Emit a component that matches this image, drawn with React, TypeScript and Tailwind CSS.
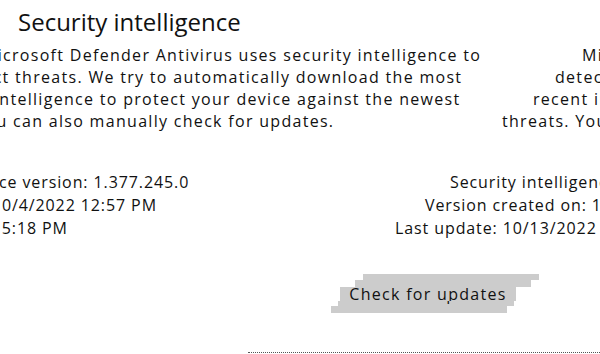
import React from "react";

// one horizontal band of the picture: content is shifted right by `shift`
// and wraps around the 600px edge
interface BandProps {
  shift: number;
  className: string;
  offsetY?: number;
  children: React.ReactNode;
}

const Band = ({ shift, className, offsetY = 0, children }: BandProps) => {
  const copy = (
    <div className="w-[600px] shrink-0" style={{ marginTop: -offsetY }}>
      {children}
    </div>
  );
  return (
    <div className={`w-[600px] overflow-hidden ${className}`}>
      <div className="flex items-start" style={{ marginLeft: shift - 600 }}>
        {copy}
        {copy}
      </div>
    </div>
  );
};

const UpdateButton = () => (
  <div className="w-[176px] h-[39px] bg-[#cccccc] flex items-center justify-center text-[16px] tracking-[1.3px] text-[#111]">
    Check for updates
  </div>
);

const paragraph = [
  { text: "Microsoft Defender Antivirus uses security intelligence to", shift: 582 },
  { text: "detect threats. We try to automatically download the most", shift: 555 },
  { text: "recent intelligence to protect your device against the newest", shift: 533 },
  { text: "threats. You can also manually check for updates.", shift: 502 },
];

const versions = [
  { text: "Security intelligence version: 1.377.245.0", shift: 450 },
  { text: "Version created on: 10/4/2022 12:57 PM", shift: 425 },
  { text: "Last update: 10/13/2022 5:18 PM", shift: 395 },
];

const buttonStrips = [
  { offsetY: 0, shift: 363, h: "h-[6px]" },
  { offsetY: 6, shift: 355, h: "h-[7px]" },
  { offsetY: 13, shift: 340, h: "h-[14px]" },
  { offsetY: 27, shift: 338, h: "h-[5px]" },
  { offsetY: 32, shift: 331, h: "h-[7px]" },
];

export default function App() {
  return (
    <div
      className="w-[600px] h-[354px] overflow-hidden bg-white flex flex-col"
      style={{ fontFamily: '"Open Sans", "Noto Sans", sans-serif' }}
    >
      <div className="h-[5px]" />
      <Band shift={18} className="h-[34px]">
        <div className="whitespace-nowrap text-[24px] leading-[34px] text-[#111]">
          Security intelligence
        </div>
      </Band>
      <div className="h-[5px]" />
      {paragraph.map((l) => (
        <Band key={l.text} shift={l.shift} className="h-[22px]">
          <div className="whitespace-nowrap text-[16px] leading-[22px] tracking-[1.3px] text-[#111]">
            {l.text}
          </div>
        </Band>
      ))}
      <div className="h-[39px]" />
      {versions.map((l) => (
        <Band key={l.text} shift={l.shift} className="h-[23px]">
          <div className="whitespace-nowrap text-[16px] leading-[23px] tracking-[0.9px] text-[#111]">
            {l.text}
          </div>
        </Band>
      ))}
      <div className="h-[34px]" />
      {buttonStrips.map((s) => (
        <Band key={s.offsetY} shift={s.shift} offsetY={s.offsetY} className={s.h}>
          <UpdateButton />
        </Band>
      ))}
      <div className="h-[39px]" />
      <Band shift={248} className="h-[2px]">
        <div className="w-[352px] border-t border-dotted border-[#555]" />
      </Band>
    </div>
  );
}
